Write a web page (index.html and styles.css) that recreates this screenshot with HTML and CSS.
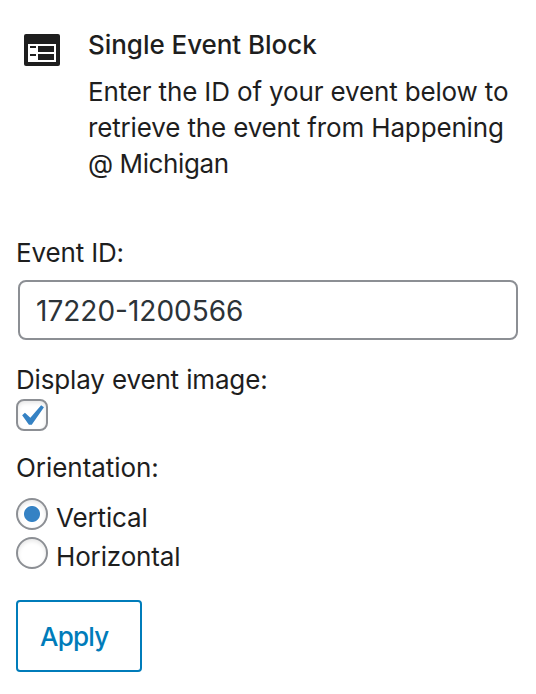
FILE: index.html
```html
<!DOCTYPE html>
<html lang="en">
<head>
<meta charset="utf-8">
<title>Single Event Block</title>
<link rel="stylesheet" href="styles.css">
</head>
<body>
<main class="panel">
  <header class="card">
    <svg class="card-icon" viewBox="0 0 36 32" aria-hidden="true">
      <rect width="36" height="32" rx="2" fill="#1e1e1e"/>
      <path d="M4 10h28v18H4z" fill="#fff"/>
      <path d="M6 12h6v2H6zM6 20h6v2H6zM14 12h16v6H14zM14 20h16v6H14z" fill="#1e1e1e"/>
    </svg>
    <div>
      <h2 class="title">Single Event Block</h2>
      <p class="description">Enter the ID of your event below to<br>retrieve the event from Happening<br><span class="at-line">@ Michigan</span></p>
    </div>
  </header>
  <form class="form">
    <label class="label" for="event-id">Event ID:</label>
    <input class="text-input" id="event-id" type="text" value="17220-1200566">
    <div class="label image-label">Display event image:</div>
    <span class="checkbox"><svg viewBox="0 0 20 20"><path d="M14.83 4.89l1.34.94-5.81 8.38H9.02L5.78 9.67l1.34-1.25 2.57 2.4z" fill="#3582c4"/></svg></span>
    <div class="label orientation-label">Orientation:</div>
    <div class="options">
      <div class="option"><span class="radio checked"></span><span class="option-text">Vertical</span></div>
      <div class="option"><span class="radio"></span><span class="option-text">Horizontal</span></div>
    </div>
    <button class="apply" type="button">Apply</button>
  </form>
</main>
</body>
</html>
```
FILE: styles.css
```css
* { box-sizing: border-box; }
body { margin: 0; background: #fff; color: #1e1e1e; font: 26px/36px Inter, sans-serif; letter-spacing: -0.15px; }
.panel { padding: 27px 16px 0; }
.card { display: flex; }
.card-icon { width: 36px; height: 32px; margin: 7px 28px 0 8px; flex: none; }
.title { margin: 0 0 11px; font-size: 26px; line-height: 36px; font-weight: 500; letter-spacing: -0.05px; }
.description { margin: 0; white-space: nowrap; }
.at-line { letter-spacing: -0.4px; }
.form { display: flex; flex-direction: column; align-items: flex-start; margin-top: 53px; }
.label { height: 36px; }
.text-input { width: 500px; height: 60px; margin: 9px 0 0 2px; padding: 2px 16px 0; border: 2px solid #8c8f94; border-radius: 8px; background: #fff; font: 28px Inter, sans-serif; color: #2c3338; }
.image-label { margin-top: 22px; }
.checkbox { display: flex; width: 32px; height: 32px; margin-top: 1px; border: 2px solid #8c8f94; border-radius: 8px; box-shadow: inset 0 2px 4px rgba(0, 0, 0, .1); }
.checkbox svg { flex: none; width: 42px; height: 42px; margin: -6px 0 0 -8px; }
.orientation-label { margin-top: 19px; letter-spacing: -0.05px; }
.options { margin-top: 12px; }
.option { display: flex; height: 39px; }
.radio { width: 32px; height: 32px; border: 2px solid #8c8f94; border-radius: 50%; box-shadow: inset 0 2px 4px rgba(0, 0, 0, .1); }
.checked { background: radial-gradient(circle, #3582c4 7.5px, #fff 8.5px); }
.option-text { margin: 2px 0 0 8px; }
.apply { width: 126px; height: 72px; margin-top: 24px; padding: 0 0 0 22px; border: 2px solid #007cba; border-radius: 4px; background: #fff; color: #007cba; font: 500 26px Inter, sans-serif; letter-spacing: -0.75px; text-align: left; }
```
